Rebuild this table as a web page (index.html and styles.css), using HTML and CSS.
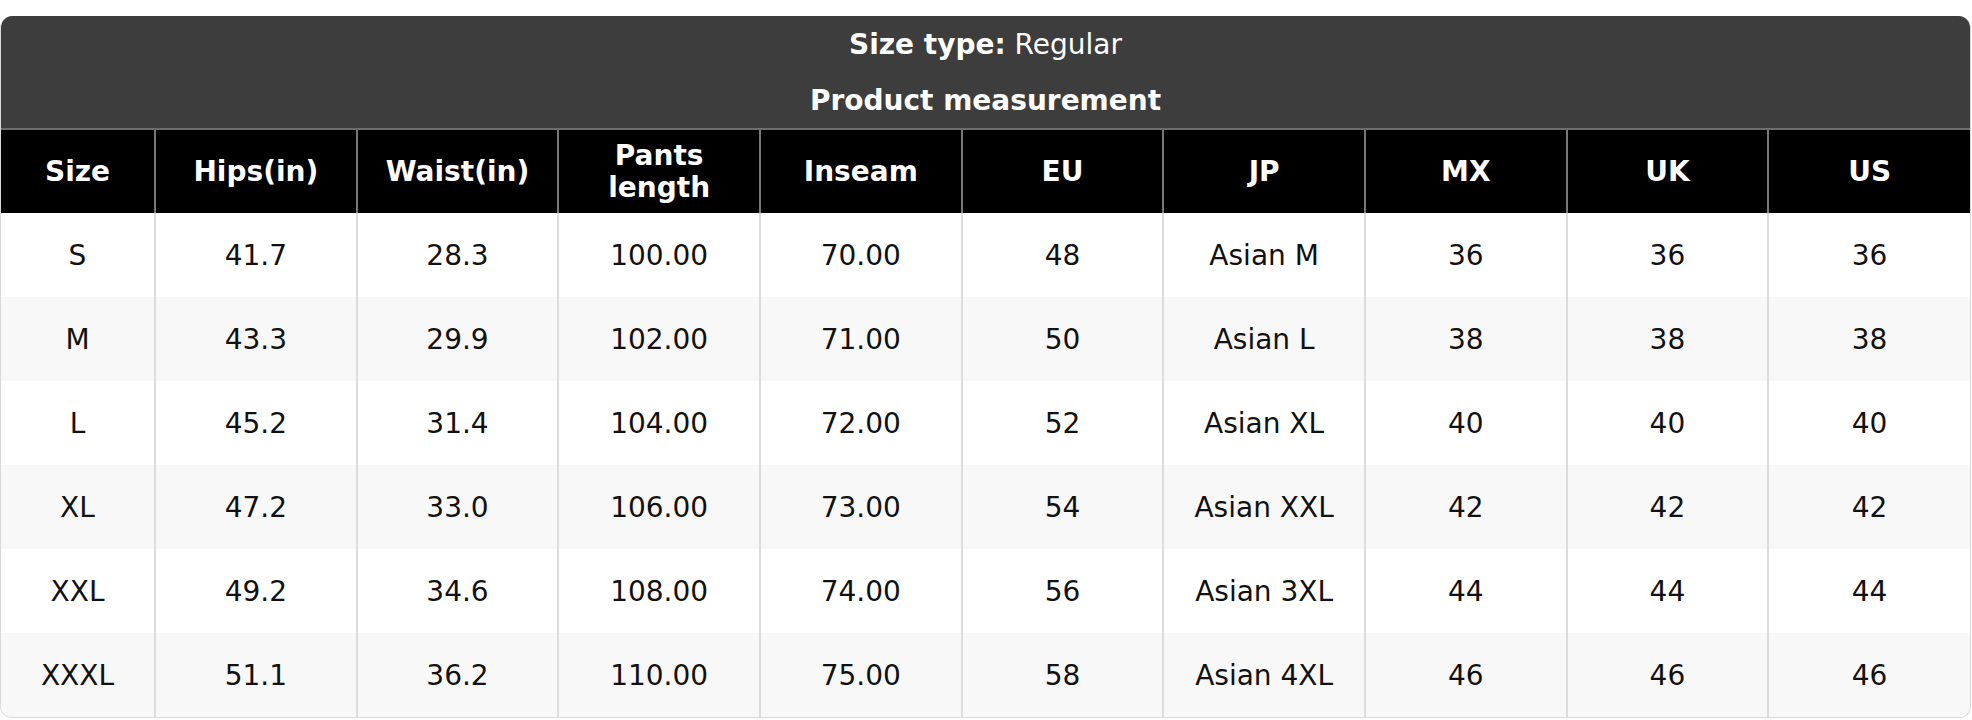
FILE: index.html
```html
<!DOCTYPE html>
<html lang="en">
<head>
<meta charset="utf-8">
<title>Size chart</title>
<link rel="stylesheet" href="styles.css">
</head>
<body>
<div class="card">
  <div class="band">
    <div class="band-line"><span class="b">Size type:</span> Regular</div>
    <div class="band-line b">Product measurement</div>
  </div>
  <table class="chart">
    <colgroup>
      <col class="c-first">
      <col><col><col><col><col><col><col><col><col>
    </colgroup>
    <thead>
      <tr>
        <th>Size</th><th>Hips(in)</th><th>Waist(in)</th><th>Pants<br>length</th><th>Inseam</th><th>EU</th><th>JP</th><th>MX</th><th>UK</th><th>US</th>
      </tr>
    </thead>
    <tbody>
      <tr><td>S</td><td>41.7</td><td>28.3</td><td>100.00</td><td>70.00</td><td>48</td><td>Asian M</td><td>36</td><td>36</td><td>36</td></tr>
      <tr><td>M</td><td>43.3</td><td>29.9</td><td>102.00</td><td>71.00</td><td>50</td><td>Asian L</td><td>38</td><td>38</td><td>38</td></tr>
      <tr><td>L</td><td>45.2</td><td>31.4</td><td>104.00</td><td>72.00</td><td>52</td><td>Asian XL</td><td>40</td><td>40</td><td>40</td></tr>
      <tr><td>XL</td><td>47.2</td><td>33.0</td><td>106.00</td><td>73.00</td><td>54</td><td>Asian XXL</td><td>42</td><td>42</td><td>42</td></tr>
      <tr><td>XXL</td><td>49.2</td><td>34.6</td><td>108.00</td><td>74.00</td><td>56</td><td>Asian 3XL</td><td>44</td><td>44</td><td>44</td></tr>
      <tr><td>XXXL</td><td>51.1</td><td>36.2</td><td>110.00</td><td>75.00</td><td>58</td><td>Asian 4XL</td><td>46</td><td>46</td><td>46</td></tr>
    </tbody>
  </table>
</div>
</body>
</html>
```
FILE: styles.css
```css
html, body {
  margin: 0;
  padding: 0;
  background: #ffffff;
}

body {
  font-family: "DejaVu Sans", "Liberation Sans", sans-serif;
  color: #000;
}

.card {
  margin-top: 16px;
  width: 1969px;
  border: 1px solid #d9d9d9;
  border-top: 0;
  border-radius: 12px;
  overflow: hidden;
}

.band {
  background: #3d3d3d;
  color: #fff;
  text-align: center;
  font-size: 28px;
  line-height: 34px;
  padding: 12px 0 10px;
  display: flex;
  flex-direction: column;
  gap: 22px;
}

.b {
  font-weight: bold;
}

.chart {
  width: 100%;
  border-collapse: collapse;
  table-layout: fixed;
}

.c-first {
  width: 154px;
}

.chart th {
  background: #000;
  color: #fff;
  font-weight: bold;
  font-size: 28px;
  line-height: 32px;
  height: 84px;
  padding: 0 4px;
  box-sizing: border-box;
  border-top: 2px solid #6e6e6e;
  border-left: 2px solid #777;
  text-align: center;
  vertical-align: middle;
}

.chart th:first-child,
.chart td:first-child {
  border-left: 0;
}

.chart td {
  font-size: 28px;
  line-height: 34px;
  height: 84px;
  padding: 2px 4px 0;
  box-sizing: border-box;
  text-align: center;
  vertical-align: middle;
  border-left: 2px solid #dcdcdc;
  color: #111;
}

.chart tbody tr:nth-child(even) td {
  background: #f8f8f8;
}
```
